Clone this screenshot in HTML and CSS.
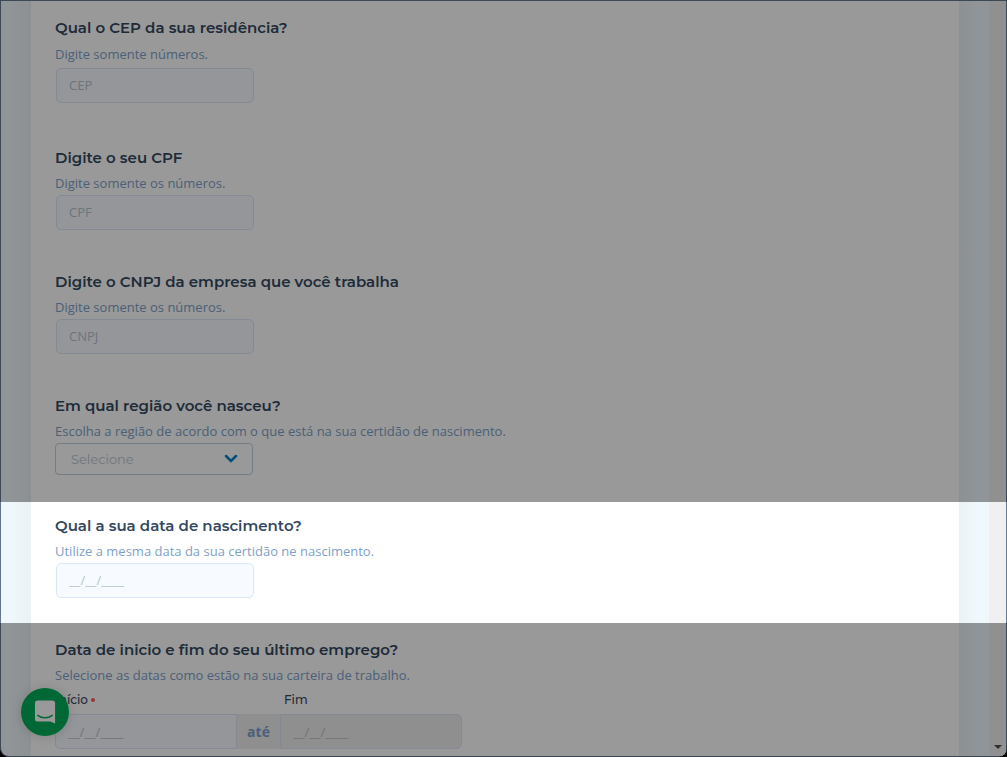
FILE: index.html
```html
<!DOCTYPE html>
<html lang="pt-BR">
<head>
<meta charset="utf-8">
<title>Formulário</title>
<link rel="stylesheet" href="styles.css">
</head>
<body>
<div class="window">
  <div class="viewport">
    <form class="card">
      <section class="field field-first">
        <label class="title" for="cep">Qual o CEP da sua residência?</label>
        <p class="hint hint-spaced">Digite somente números.</p>
        <input class="text-input" id="cep" type="text" placeholder="CEP">
      </section>
      <section class="field">
        <label class="title" for="cpf">Digite o seu CPF</label>
        <p class="hint">Digite somente os números.</p>
        <input class="text-input" id="cpf" type="text" placeholder="CPF">
      </section>
      <section class="field">
        <label class="title" for="cnpj">Digite o CNPJ da empresa que você trabalha</label>
        <p class="hint">Digite somente os números.</p>
        <input class="text-input" id="cnpj" type="text" placeholder="CNPJ">
      </section>
      <section class="field field-select">
        <label class="title" for="regiao">Em qual região você nasceu?</label>
        <p class="hint">Escolha a região de acordo com o que está na sua certidão de nascimento.</p>
        <div class="select-wrap">
          <select class="select" id="regiao"><option>Selecione</option></select>
          <svg class="chevron" viewBox="0 0 14 10" aria-hidden="true"><path d="M2 2l5 5 5-5"/></svg>
        </div>
      </section>
      <section class="field field-active">
        <label class="title" for="nascimento">Qual a sua data de nascimento?</label>
        <p class="hint">Utilize a mesma data da sua certidão ne nascimento.</p>
        <input class="text-input" id="nascimento" type="text" placeholder="__/__/____">
      </section>
      <section class="field">
        <h2 class="title">Data de inicio e fim do seu último emprego?</h2>
        <p class="hint">Selecione as datas como estão na sua carteira de trabalho.</p>
        <div class="range">
          <label class="range-label" for="inicio">Início<span class="required"></span></label>
          <label class="range-label range-label-end" for="fim">Fim</label>
          <input class="range-input" id="inicio" type="text" placeholder="__/__/____">
          <span class="range-join">até</span>
          <input class="range-input range-input-end" id="fim" type="text" placeholder="__/__/____" disabled>
        </div>
      </section>
    </form>
    <div class="scrollbar"><span class="scroll-arrow"></span></div>
    <button class="chat" type="button" aria-label="Abrir chat">
      <svg viewBox="0 0 24 26" aria-hidden="true"><path class="bubble" d="M4 1h15a3 3 0 0 1 3 3v21l-5-2H4a3 3 0 0 1-3-3V4a3 3 0 0 1 3-3z"/><path class="smile" d="M4 16.500c4 3.300 11 3.300 15 0"/></svg>
    </button>
  </div>
</div>
</body>
</html>
```
FILE: styles.css
```css
* { box-sizing: border-box; }

body {
  margin: 0;
  background: #000;
  font-family: "Open Sans", "Noto Sans", sans-serif;
  font-size: 13px;
}

.window {
  position: relative;
  height: 100vh;
  overflow: hidden;
  padding: 1px;
  border-radius: 0 0 9px 9px;
  background: #66788f;
}

.viewport {
  display: flex;
  height: 100%;
  padding-left: 30px;
  border-radius: 0 0 8px 8px;
  background: linear-gradient(to right, #eff8fd 0, #eff8fd 8px, #ebf1f4 30px, #ebf1f4 calc(100% - 48px), #eff8fd calc(100% - 30px));
}

.card {
  flex: 1;
  min-width: 0;
  margin-right: 30px;
  padding: 1px 24px 0;
  background: #fff;
}

.field {
  height: 124px;
  padding-top: 16px;
}
.field-first { height: 130px; }
.field-select { height: 120px; }

.title {
  display: block;
  margin: 0;
  color: #334860;
  font: 600 15px/20px Montserrat, Inter, sans-serif;
}

.hint {
  margin: 5px 0 2px;
  color: #7e9fc8;
  line-height: 20px;
}
.hint-spaced { margin: 6px 0 4px; }

.text-input {
  display: block;
  width: 198px;
  height: 35px;
  margin-left: 1px;
  padding: 0 12px 2px;
  border: 1px solid #dae7f5;
  border-radius: 5px;
  background: #f7fbff;
  font: inherit;
}

input::placeholder {
  color: #b5c4d0;
  opacity: 1;
}

.select-wrap {
  position: relative;
  width: 198px;
}
.select {
  display: block;
  width: 100%;
  height: 32px;
  padding: 0 15px;
  appearance: none;
  border: 1px solid #bfd0e0;
  border-radius: 4px;
  background: #fff;
  color: #b9c5d3;
  font: 400 13px Montserrat, Inter, sans-serif;
}
.chevron {
  position: absolute;
  top: 11px;
  right: 15px;
  width: 14px;
  height: 10px;
  fill: none;
  stroke: #0083ca;
  stroke-width: 2.5;
  stroke-linecap: round;
  pointer-events: none;
}

.field-active { position: relative; }

/* Spotlight: everything outside this row is dimmed. */
.field-active::after {
  content: "";
  position: absolute;
  z-index: 5;
  top: 2px;
  bottom: 1px;
  left: -100px;
  right: -100px;
  box-shadow: 0 0 0 1000px rgba(0, 0, 0, 0.4);
  pointer-events: none;
}

.range {
  display: grid;
  grid-template-columns: 182px 43px 182px;
  row-gap: 4px;
  padding-top: 3px;
}
.range-label {
  color: #334860;
  font: 500 12px/20px Montserrat, Inter, sans-serif;
}
.range-label-end {
  grid-column: 2 / 4;
  padding-left: 47px;
}
.required {
  display: inline-block;
  width: 4px;
  height: 4px;
  margin: 0 0 2px 3px;
  border-radius: 50%;
  background: #ff5a5a;
}
.range-input {
  width: 100%;
  height: 35px;
  padding: 0 12px;
  border: 1px solid #dae7f5;
  border-radius: 5px 0 0 5px;
  background: #f7fbff;
  font: inherit;
}
.range-input-end {
  border-radius: 0 5px 5px 0;
  background: #eee;
}
.range-join {
  background: #eee;
  color: #7e9fc8;
  font-size: 14px;
  font-weight: 700;
  line-height: 35px;
  text-align: center;
}

.scrollbar {
  display: flex;
  align-items: flex-end;
  justify-content: center;
  width: 17px;
  padding-bottom: 7px;
  background: #f1f0f0;
}
.scroll-arrow {
  border: 4px solid transparent;
  border-top-color: #505050;
  border-bottom: 0;
}

.chat {
  position: absolute;
  bottom: 21px;
  left: 21px;
  width: 48px;
  height: 48px;
  padding: 11px 12px 11px 13px;
  border: 0;
  border-radius: 50%;
  background: #00ad58;
  box-shadow: 0 1px 12px rgba(0, 0, 0, 0.15);
}
.chat svg { display: block; width: 23px; height: 26px; }
.bubble { fill: #fff; }
.smile { fill: none; stroke: #00ad58; stroke-width: 1.5; stroke-linecap: round; }
```
